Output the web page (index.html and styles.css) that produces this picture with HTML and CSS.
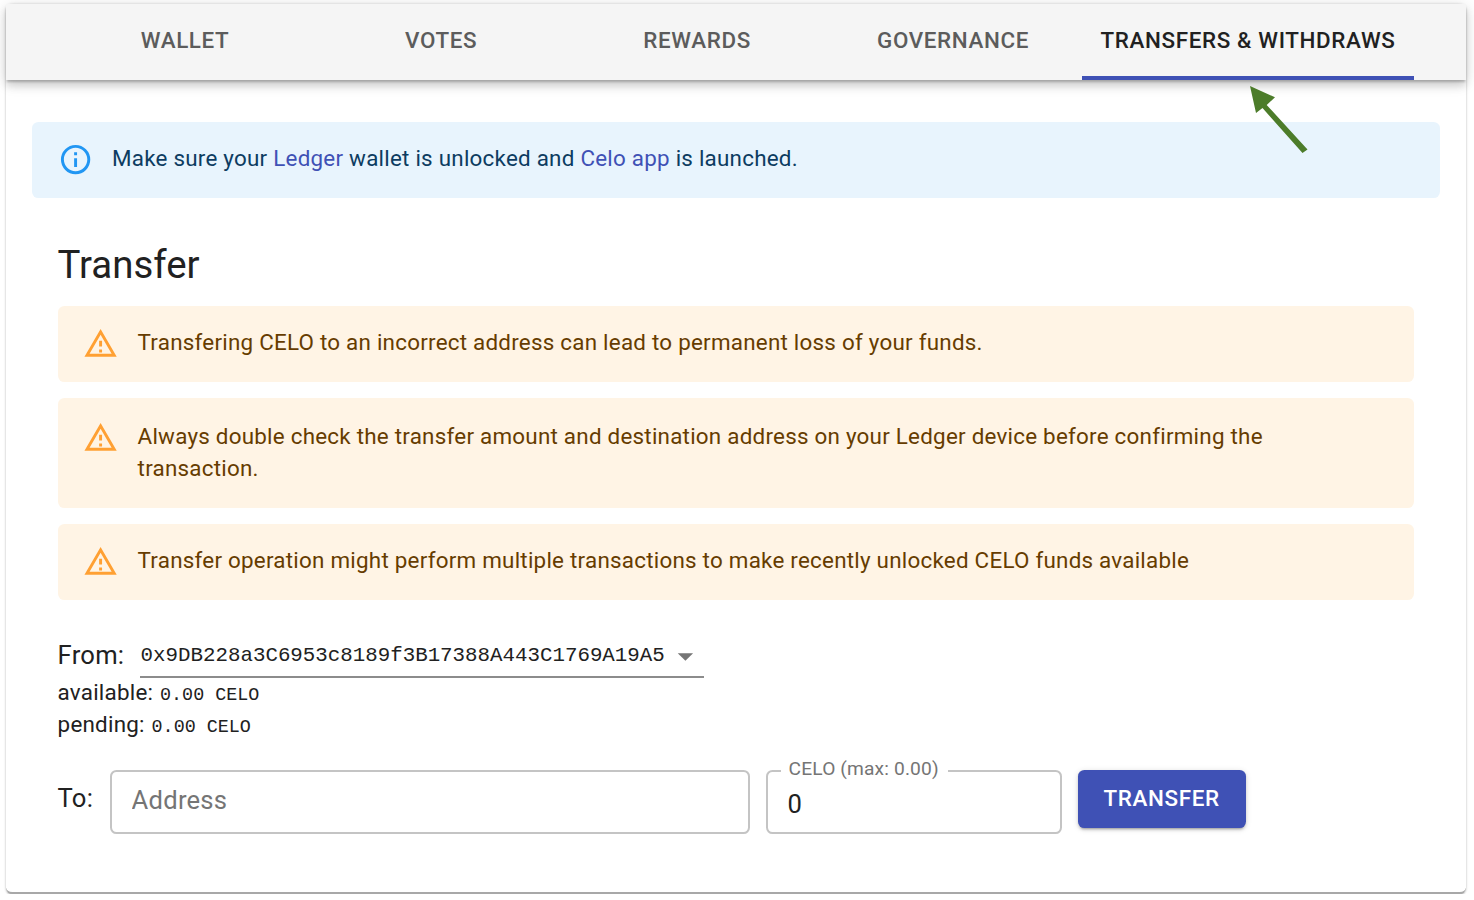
FILE: index.html
```html
<!DOCTYPE html>
<html lang="en">
<head>
  <meta charset="UTF-8">
  <title>Transfers &amp; Withdraws</title>
  <link rel="stylesheet" href="styles.css">
</head>
<body>
  <div class="card">
    <div class="tabs">
      <div class="tab">WALLET</div>
      <div class="tab">VOTES</div>
      <div class="tab">REWARDS</div>
      <div class="tab">GOVERNANCE</div>
      <div class="tab tab-active">TRANSFERS &amp; WITHDRAWS</div>
    </div>

    <!-- annotation arrow drawn on top of the screenshot -->
    <svg class="arrow" width="70" height="80" viewBox="0 0 70 80">
      <path d="M4 2L29 13.3L20.7 21L61.5 65.5L56.5 69L16.5 24L10 29Z" fill="#4c7c2a"/>
    </svg>

    <div class="content">
      <div class="alert alert-info">
        <svg class="alert-icon" viewBox="0 0 24 24"><path d="M11,9H13V7H11V9M12,20C7.59,20 4,16.41 4,12C4,7.59 7.59,4 12,4C16.41,4 20,7.59 20,12C20,16.41 16.41,20 12,20M12,2A10,10 0 0,0 2,12A10,10 0 0,0 12,22A10,10 0 0,0 22,12A10,10 0 0,0 12,2M11,17H13V11H11V17Z"/></svg>
        <div class="alert-msg">Make sure your <a href="#">Ledger</a> wallet is unlocked and <a href="#">Celo app</a> is launched.</div>
      </div>

      <div class="panel">
        <h2 class="title">Transfer</h2>

        <div class="alert alert-warn">
          <svg class="alert-icon" viewBox="0 0 24 24"><path d="M12 5.99L19.53 19H4.47L12 5.99M12 2L1 21h22L12 2zm1 14h-2v2h2v-2zm0-6h-2v4h2v-4z"/></svg>
          <div class="alert-msg">Transfering CELO to an incorrect address can lead to permanent loss of your funds.</div>
        </div>
        <div class="alert alert-warn alert-tall">
          <svg class="alert-icon" viewBox="0 0 24 24"><path d="M12 5.99L19.53 19H4.47L12 5.99M12 2L1 21h22L12 2zm1 14h-2v2h2v-2zm0-6h-2v4h2v-4z"/></svg>
          <div class="alert-msg">Always double check the transfer amount and destination address on your Ledger device before confirming the<br>transaction.</div>
        </div>
        <div class="alert alert-warn">
          <svg class="alert-icon" viewBox="0 0 24 24"><path d="M12 5.99L19.53 19H4.47L12 5.99M12 2L1 21h22L12 2zm1 14h-2v2h2v-2zm0-6h-2v4h2v-4z"/></svg>
          <div class="alert-msg">Transfer operation might perform multiple transactions to make recently unlocked CELO funds available</div>
        </div>

        <div class="from-row">
          <span class="from-label">From:</span>
          <div class="select">
            <span class="select-value">0x9DB228a3C6953c8189f3B17388A443C1769A19A5</span>
            <svg class="select-arrow" viewBox="0 0 24 24"><path d="M7 10l5 5 5-5z"/></svg>
          </div>
        </div>
        <div class="balance">available: <span class="mono">0.00 CELO</span></div>
        <div class="balance">pending: <span class="mono">0.00 CELO</span></div>

        <div class="to-row">
          <span class="to-label">To:</span>
          <input class="field field-address" type="text" placeholder="Address">
          <div class="amount">
            <span class="amount-label">CELO (max: 0.00)</span>
            <input class="field field-amount" type="text" value="0">
          </div>
          <button class="btn-transfer">TRANSFER</button>
        </div>
      </div>
    </div>
  </div>
</body>
</html>
```
FILE: styles.css
```css
* {
  margin: 0;
  padding: 0;
  box-sizing: border-box;
}
body {
  background: #ffffff;
  padding: 4px 8px 0 6px;
  font-family: Roboto, "Liberation Sans", sans-serif;
  letter-spacing: .24px;
  color: #212121;
}
.card {
  position: relative;
  height: 890px;
  background: #ffffff;
  border-bottom: 2px solid #a8a8a8;
  border-radius: 6.4px;
  box-shadow: 0 1px 2px rgba(0,0,0,.2), 0 0 3px rgba(0,0,0,.14);
}

/* tabs */
.tabs {
  position: relative;
  display: flex;
  justify-content: center;
  height: 76px;
  background: #f5f5f5;
  box-shadow: 0 3px 2px -1px rgba(0,0,0,.2), 0 6px 8px rgba(0,0,0,.14), 0 2px 16px rgba(0,0,0,.12);
}
.tab {
  display: flex;
  align-items: center;
  justify-content: center;
  min-width: 256px;
  padding: 0 20px 4px 18px;
  font-size: 22.4px;
  font-weight: 500;
  letter-spacing: .64px;
  color: #5c5c5c;
}
.tab-active {
  color: #212121;
  border-bottom: 4px solid #3f51b5;
  padding: 0 18.4px;
}
.arrow {
  position: absolute;
  left: 1240px;
  top: 80px;
}

/* main area */
.content {
  padding: 42px 26px 0;
}
.alert {
  display: flex;
  padding: 9.6px 25.6px;
  border-radius: 6.4px;
  font-size: 22.4px;
  line-height: 32px;
}
.alert-tall {
  padding-top: 11.6px;
}
.alert-icon {
  flex: none;
  width: 35.2px;
  height: 35.2px;
  margin: 10.5px 19.2px 0 0;
  fill: currentColor;
}
.alert-msg {
  padding: 10px 0 14.8px;
}
.alert-info {
  background: #e8f4fd;
  color: #0d3c61;
}
.alert-info .alert-icon {
  color: #2196f3;
}
.alert-info a {
  color: #3f51b5;
  text-decoration: none;
}
.alert-warn {
  background: #fff4e5;
  color: #663c00;
  margin-bottom: 16px;
}
.alert-warn .alert-icon {
  color: #ffa033;
}

.panel {
  padding: 0 25.6px;
}
.title {
  margin: 42px 0 16px;
  font-size: 38.4px;
  font-weight: 400;
  line-height: 50px;
  letter-spacing: 0;
}

/* from */
.from-row {
  display: flex;
  align-items: flex-end;
  margin-top: 32px;
  margin-bottom: -2px;
  font-size: 25.6px;
}
.from-label {
  width: 82px;
  padding-bottom: 4px;
  line-height: 38px;
}
.select {
  display: flex;
  align-items: center;
  width: 564px;
  height: 46px;
  padding: 4px 0 0 1px;
  border-bottom: 2px solid #8c8c8c;
}
.select-value {
  font-family: "Liberation Mono", monospace;
  font-size: 20.8px;
  letter-spacing: 0;
  color: #212121;
}
.select-arrow {
  width: 38.4px;
  height: 38.4px;
  margin-left: 2px;
  fill: #757575;
}
.balance {
  font-size: 22.4px;
  line-height: 32px;
}
.mono {
  margin-left: 1px;
  font-family: "Liberation Mono", monospace;
  font-size: 18.4px;
  line-height: 1;
  letter-spacing: 0;
}

/* to */
.to-row {
  display: flex;
  align-items: flex-start;
  margin-top: 30px;
}
.to-label {
  width: 52px;
  font-size: 25.6px;
  line-height: 56px;
}
.field {
  height: 64px;
  border: 2px solid #c4c4c4;
  border-radius: 6.4px;
  outline: 0;
  background: #ffffff;
  font-family: Roboto, "Liberation Sans", sans-serif;
  font-size: 25.6px;
  letter-spacing: .24px;
  color: #212121;
}
.field::placeholder {
  color: #757575;
  opacity: 1;
}
.field-address {
  width: 640px;
  padding: 0 20px 4px;
}
.amount {
  position: relative;
  margin-left: 16px;
}
.field-amount {
  display: block;
  width: 296px;
  padding: 4px 20px 0;
}
.amount-label {
  position: absolute;
  left: 15px;
  top: -13px;
  padding: 0 9px 0 8px;
  background: #ffffff;
  font-size: 19.2px;
  line-height: 24px;
  letter-spacing: .14px;
  color: #757575;
}
.btn-transfer {
  width: 168px;
  height: 57.6px;
  padding-bottom: 2px;
  margin-left: 16px;
  border: 0;
  border-radius: 6.4px;
  background: #3f51b5;
  color: #ffffff;
  font-family: Roboto, "Liberation Sans", sans-serif;
  font-size: 22.4px;
  font-weight: 500;
  letter-spacing: .64px;
  box-shadow: 0 3px 2px -2px rgba(0,0,0,.2), 0 2px 3px rgba(0,0,0,.14), 0 1px 6px rgba(0,0,0,.12);
}
```
